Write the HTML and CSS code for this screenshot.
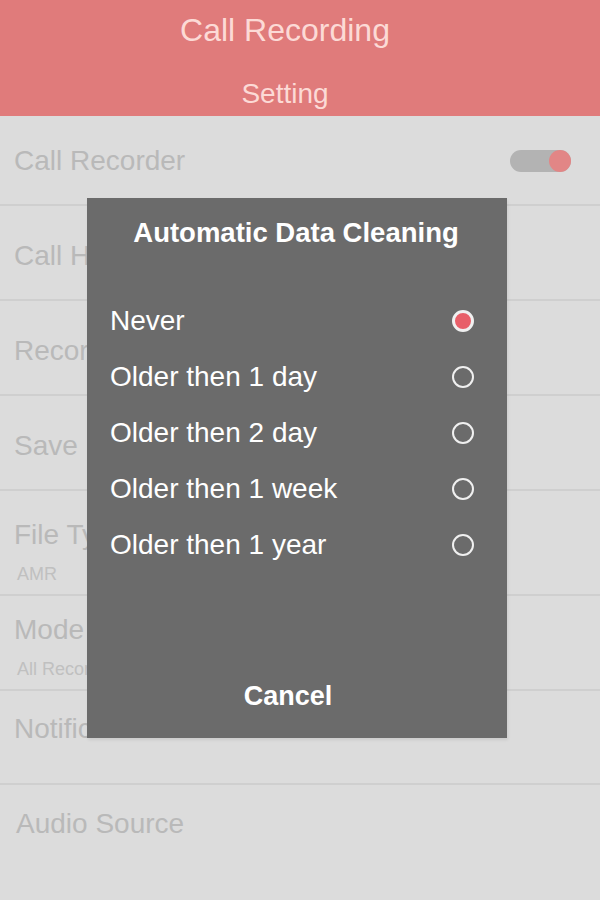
FILE: index.html
```html
<!DOCTYPE html>
<html lang="en">
<head>
  <meta charset="UTF-8" />
  <meta name="viewport" content="width=device-width, initial-scale=1" />
  <title>Call Recording - Setting</title>
  <link rel="stylesheet" href="styles.css">
</head>
<body>

  <header class="app-header">
    <h1>Call Recording</h1>
    <h2>Setting</h2>
  </header>

  <ul class="settings">
    <li class="row row-switch">
      <span class="row-title">Call Recorder</span>
      <span class="toggle on"><span class="knob"></span></span>
    </li>
    <li class="row"><span class="row-title">Call History</span></li>
    <li class="row"><span class="row-title">Record Quality</span></li>
    <li class="row"><span class="row-title">Save Location</span></li>
    <li class="row row-double row-file">
      <span class="row-title">File Type</span>
      <span class="row-sub">AMR</span>
    </li>
    <li class="row row-double">
      <span class="row-title">Mode</span>
      <span class="row-sub">All Records</span>
    </li>
    <li class="row row-plain"><span class="row-title">Notification</span></li>
    <li class="row row-plain row-last"><span class="row-title">Audio Source</span></li>
  </ul>

  <div class="dialog">
    <h3>Automatic Data Cleaning</h3>
    <ul class="options">
      <li class="option"><span>Never</span><span class="radio checked"></span></li>
      <li class="option"><span>Older then 1 day</span><span class="radio"></span></li>
      <li class="option"><span>Older then 2 day</span><span class="radio"></span></li>
      <li class="option"><span>Older then 1 week</span><span class="radio"></span></li>
      <li class="option"><span>Older then 1 year</span><span class="radio"></span></li>
    </ul>
    <button class="cancel">Cancel</button>
  </div>

</body>
</html>
```

FILE: styles.css
```css
body {
  margin: 0;
  font-family: 'Liberation Sans', Arial, sans-serif;
  background: #dcdcdc;
  width: 600px;
  height: 900px;
  overflow: hidden;
  position: relative;
}
.app-header {
  background: #e07b7b;
  color: #fcdad6;
  text-align: center;
  height: 116px;
  box-sizing: border-box;
  padding: 10px 30px 0 0;
}
.app-header h1 {
  margin: 0;
  font-size: 32px;
  font-weight: 400;
  line-height: 40px;
}
.app-header h2 {
  margin: 27px 0 0;
  font-size: 28px;
  font-weight: 400;
  line-height: 34px;
}
.settings {
  list-style: none;
  margin: 0;
  padding: 0;
}
.row {
  display: flex;
  flex-direction: column;
  align-items: flex-start;
  height: 95px;
  box-sizing: border-box;
  padding: 34px 29px 0 14px;
  border-bottom: 2px solid #cfcfcf;
  color: #b9b9b9;
  white-space: nowrap;
}
.row-title {
  font-size: 28px;
  line-height: 32px;
}
.row-switch {
  height: 90px;
  flex-direction: row;
  align-items: center;
  justify-content: space-between;
  padding-top: 2px;
}
.row-double {
  padding-top: 18px;
}
.row-file {
  height: 105px;
  padding-top: 28px;
}
.row-plain {
  height: 94px;
  padding-top: 22px;
}
.row-last {
  border-bottom: none;
  padding-left: 16px;
  padding-top: 23px;
}
.row-sub {
  margin-top: 12px;
  font-size: 18px;
  line-height: 22px;
  color: #c0c0c0;
  padding-left: 3px;
}
.toggle {
  width: 61px;
  height: 22px;
  border-radius: 11px;
  background: #b3b3b3;
  display: flex;
  justify-content: flex-end;
}
.toggle .knob {
  width: 22px;
  height: 22px;
  border-radius: 50%;
  background: #e28686;
}
.dialog {
  position: absolute;
  top: 198px;
  left: 87px;
  width: 420px;
  height: 540px;
  box-sizing: border-box;
  background: #6b6b6b;
  color: #fff;
  display: flex;
  flex-direction: column;
  padding: 19px 33px 26px 23px;
  box-shadow: 1px 2px 3px rgba(0, 0, 0, 0.08);
}
.dialog h3 {
  margin: 0;
  font-size: 27.5px;
  line-height: 32px;
  font-weight: 700;
  text-align: center;
  padding-left: 8px;
}
.options {
  list-style: none;
  margin: 44px 0 0;
  padding: 0;
}
.option {
  height: 56px;
  display: flex;
  align-items: center;
  justify-content: space-between;
  font-size: 28px;
}
.radio {
  width: 22px;
  height: 22px;
  box-sizing: border-box;
  border: 2px solid #f0f0f0;
  border-radius: 50%;
}
.radio.checked {
  border-width: 3px;
  background: #e85f69;
}
.cancel {
  margin-top: auto;
  background: none;
  border: none;
  padding: 0 8px 0 0;
  color: #fff;
  font-family: inherit;
  font-size: 27px;
  font-weight: 700;
  line-height: 32px;
  cursor: pointer;
}
```
